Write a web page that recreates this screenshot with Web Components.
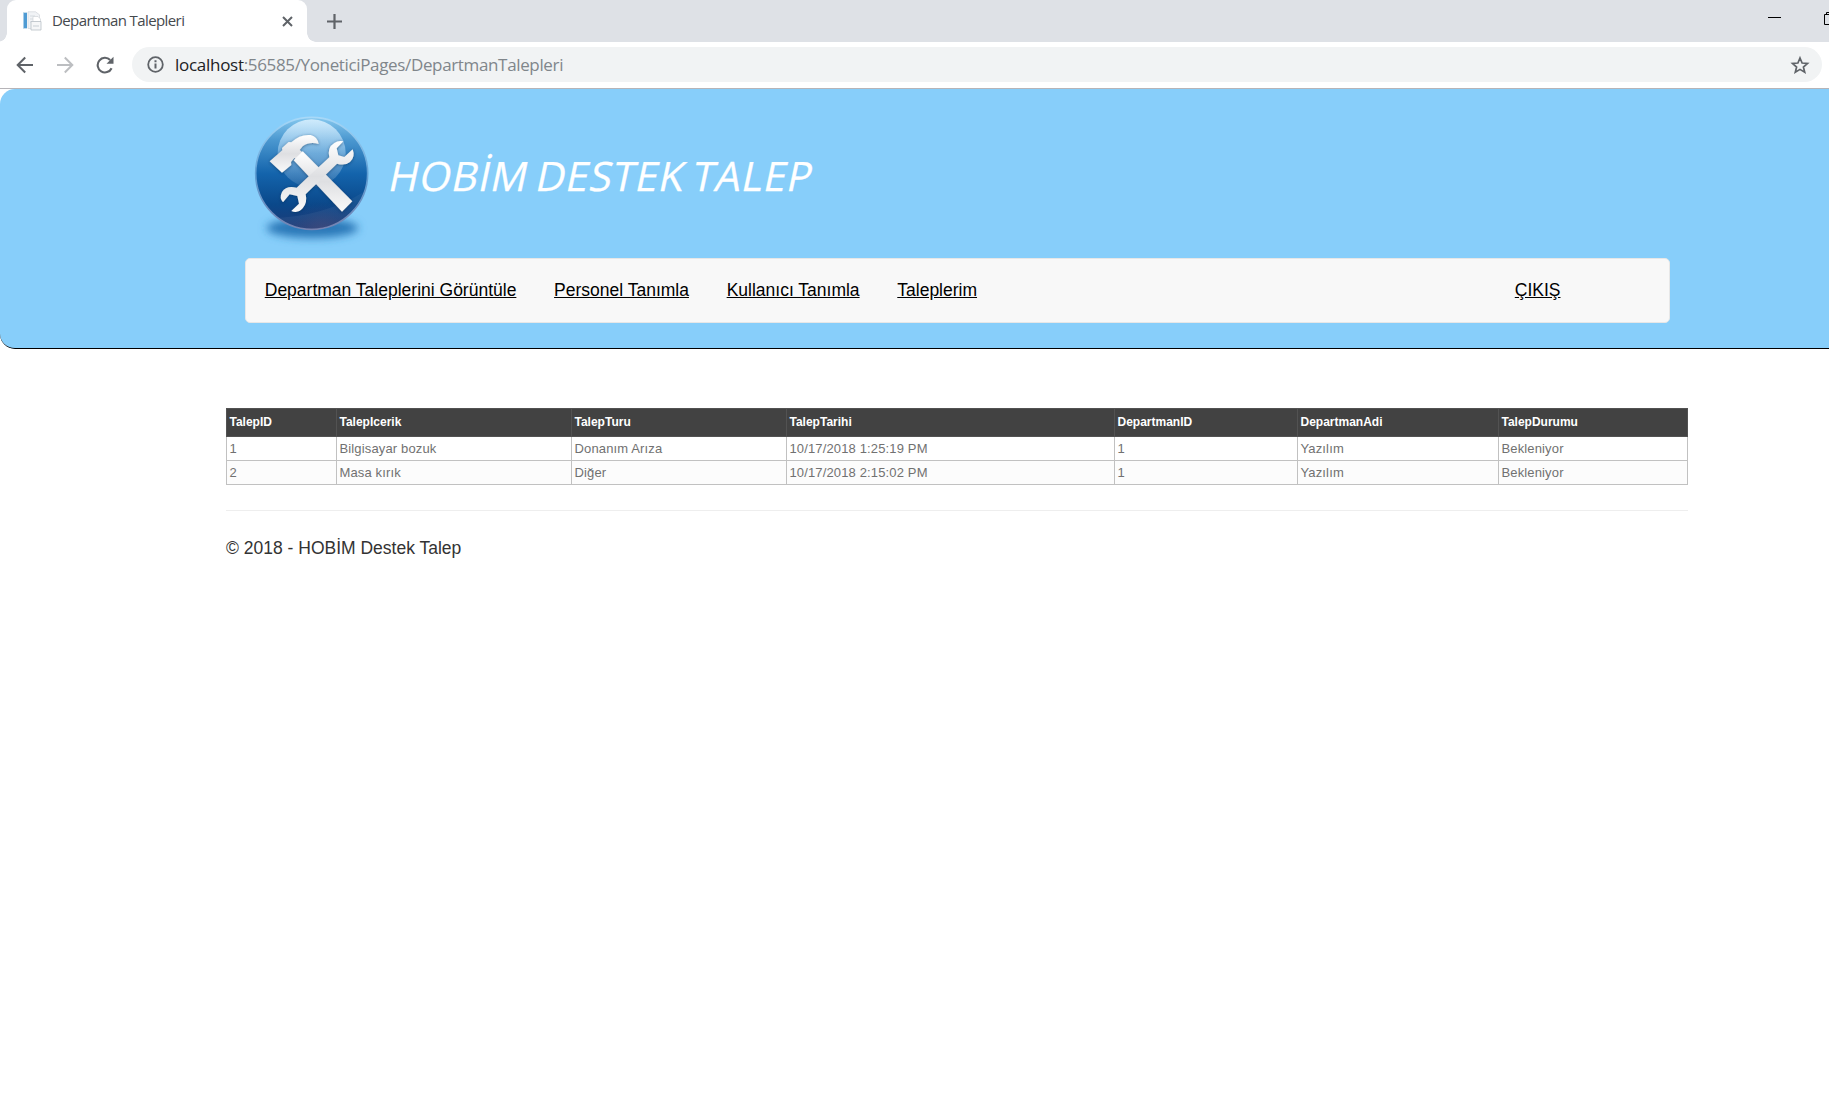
<!DOCTYPE html>
<html lang="tr">
<head>
<meta charset="utf-8">
<title>Departman Talepleri</title>
<style>
html,body{margin:0;padding:0;height:100%;overflow:hidden;background:#fff;font-family:"Liberation Sans",Arial,sans-serif}
</style>
</head>
<body>
<app-window></app-window>
<script>
const define = (name, html) => customElements.define(name, class extends HTMLElement {
  constructor() {
    super();
    const t = document.createElement('template');
    t.innerHTML = html;
    this.attachShadow({ mode: 'open' }).appendChild(t.content.cloneNode(true));
  }
});

define('tab-strip', `
<style>
:host{display:flex;height:42px;background:#dee1e6;position:relative;overflow:hidden}
.tab{box-sizing:border-box;margin-left:7px;width:300px;height:42px;background:#fff;border-radius:9px 9px 0 0;display:flex;align-items:center;padding-left:15px;position:relative}
.tab::before,.tab::after{content:"";position:absolute;bottom:0;width:9px;height:9px}
.tab::before{left:-9px;background:radial-gradient(circle at 0 0,transparent 8.5px,#fff 9px)}
.tab::after{right:-9px;background:radial-gradient(circle at 100% 0,transparent 8.5px,#fff 9px)}
.title{margin-left:10px;padding-bottom:2px;width:229.500px;font:15px/20px "Open Sans",sans-serif;letter-spacing:-.6px;color:#45494d;white-space:nowrap}
.plus{margin:12.500px 0 0 19px}
.win{margin:10px 0 0 auto}
svg{display:block;flex:none}
</style>
<div class="tab">
<svg width="20" height="20" viewBox="0 0 20 20"><rect x="1.500" y="2" width="3.500" height="15" fill="#4f9bd3"/><path d="M1 1.500h4M1 17.500h4" stroke="#c3dcec"/><path d="M6 .8h7.500l4 3v13.700H6z" fill="#f1f3f6" stroke="#d5d9de" stroke-width=".8"/><path d="M8 5h5M8 8h3M8 11h2" stroke="#d5dbe0"/><path d="M11 5.500h5l2.500 2.500v3h-7.500z" fill="#fff" stroke="#d0d4d9" stroke-width=".7"/><path d="M9 10.500h10v8.500H9z" fill="#f6f7f8" stroke="#b9c0c7" stroke-width=".8"/><path d="M11 15h6" stroke="#c8cfd5"/></svg>
<div class="title">Departman Talepleri</div>
<svg width="11" height="11" viewBox="0 0 11 11"><path d="M1 1l9 9M10 1l-9 9" stroke="#5f6368" stroke-width="2"/></svg>
</div>
<svg class="plus" width="17" height="17" viewBox="0 0 17 17"><path d="M8.5 1v15M1 8.5h15" stroke="#5f6368" stroke-width="2.2"/></svg>
<svg class="win" width="61" height="17" viewBox="0 0 61 17"><path d="M0 7.5h13M56.500 4.500v10h10v-10zM58.500 4v-1.500h4" fill="none" stroke="#000"/></svg>
`);

define('tool-bar', `
<style>
:host{box-sizing:border-box;height:47px;background:#fff;border-bottom:1px solid #b6b4b8;display:flex;align-items:flex-start;padding:5px 7px 0 16px}
svg{display:block;flex:none}
.b{margin-top:9px}
.fwd{margin-left:22px}
.rel{margin-left:22px}
.omni{box-sizing:border-box;margin-left:18px;flex:1;height:35px;border-radius:18px;background:#f1f3f4;display:flex;align-items:center;padding:0 12px 0 15px}
.url{margin-left:11px;flex:1;font:17px/24px "Open Sans",sans-serif;letter-spacing:-.35px;color:#80868b;white-space:nowrap}
.url b{font-weight:400;letter-spacing:-.28px;color:#202124}
</style>
<svg class="b" width="18" height="18" viewBox="0 0 18 18"><path d="M17 9H2M9.200 1.500L1.700 9l7.500 7.500" fill="none" stroke="#5f6368" stroke-width="2"/></svg>
<svg class="b fwd" width="18" height="18" viewBox="0 0 18 18"><path d="M1 9h15M8.800 1.500L16.300 9l-7.500 7.500" fill="none" stroke="#bcbec1" stroke-width="2"/></svg>
<svg class="b rel" width="18" height="18" viewBox="0 0 18 18"><path d="M15.600 12.200a7.300 7.300 0 1 1-1.400-8.200" fill="none" stroke="#5f6368" stroke-width="2.100"/><path d="M17.500 .8v7h-7z" fill="#5f6368"/></svg>
<div class="omni">
<svg width="17" height="17" viewBox="0 0 17 17"><circle cx="8.500" cy="8.500" r="7.300" fill="none" stroke="#5f6368" stroke-width="1.800"/><path d="M8.500 7.500v5M8.500 4.300v2" stroke="#5f6368" stroke-width="2"/></svg>
<div class="url"><b>localhost</b>:56585/YoneticiPages/DepartmanTalepleri</div>
<svg width="20" height="20" viewBox="0 0 20 20"><path d="M10 3l2.100 5 5.400.5-4.100 3.500 1.300 5.300-4.700-2.900-4.700 2.900 1.300-5.300-4.100-3.500 5.400-.5z" fill="none" stroke="#5f6368" stroke-width="1.700"/></svg>
</div>
`);

define('tools-logo', `
<style>:host{display:block;width:145px;height:158px}svg{display:block}</style>
<svg width="145" height="158" viewBox="15 0 435 474">
<defs>
<linearGradient id="g" x1="0" y1="0" x2="0" y2="1"><stop offset="0" stop-color="#86c8ee"/><stop offset=".2" stop-color="#4b98d0"/><stop offset=".5" stop-color="#1464ac"/><stop offset=".78" stop-color="#0a488a"/><stop offset="1" stop-color="#1f3a76"/></linearGradient>
<linearGradient id="h" x1="0" y1="0" x2="0" y2="1"><stop offset="0" stop-color="#d8effe" stop-opacity=".9"/><stop offset=".5" stop-color="#b4dcf8" stop-opacity=".45"/><stop offset="1" stop-color="#fff" stop-opacity=".08"/></linearGradient>
<linearGradient id="r" x1="0" y1="0" x2="0" y2="1"><stop offset="0" stop-color="#a8d9f8"/><stop offset=".5" stop-color="#5f9fd4"/><stop offset="1" stop-color="#7583b2"/></linearGradient>
<linearGradient id="m" x1="0" y1="0" x2="0" y2="1"><stop offset="0" stop-color="#fff"/><stop offset=".5" stop-color="#dedfe2"/><stop offset="1" stop-color="#fafafa"/></linearGradient>
<radialGradient id="p" cx=".6" cy="1.04" r=".3"><stop offset="0" stop-color="#564a74" stop-opacity=".45"/><stop offset="1" stop-color="#2a3d78" stop-opacity="0"/></radialGradient>
<filter id="s" x="-30%" y="-80%" width="160%" height="260%"><feGaussianBlur stdDeviation="13"/></filter>
<filter id="d" x="-20%" y="-20%" width="140%" height="140%"><feDropShadow dx="0" dy="2" stdDeviation="4" flood-color="#062c55" flood-opacity=".6"/></filter>
<clipPath id="c"><circle cx="215" cy="220" r="167"/></clipPath>
</defs>
<ellipse cx="217" cy="384" rx="138" ry="30" fill="#2c78b8" filter="url(#s)"/>
<circle cx="215" cy="220" r="168" fill="url(#g)" stroke="url(#r)" stroke-width="5"/>
<g clip-path="url(#c)"><circle cx="215" cy="220" r="167" fill="url(#p)"/>
<path d="M45 352q180 14 330-78v120H45z" fill="#fff" opacity=".05"/></g>
<circle cx="215" cy="160" r="102" fill="url(#h)"/>
<g fill="url(#m)" filter="url(#d)">
<path d="M89 184L127 151l-1-7 20-18 8 1q26-25 58-22 20 5 24 27-28-8-48 7l-9 11 20 17-19 18-17-11-10 12 1 9-28 23z"/>
<path d="M161 181l27-27 149 150-31 31z"/>
<path d="M203 232l65-60q-7-30 15-43 11-8 27-5l-20 21 5 21 18 5 25-23q9 23-8 38-15 12-39 5l-94 92q6 25-9 42-14 16-34 8l23-22-5-23-23-5-20 24q-12-13-3-31 13-21 44-13z"/>
</g>
</svg>
`);

define('site-nav', `
<style>
:host{box-sizing:border-box;height:65px;width:1425px;border:1px solid #e7e7e7;border-radius:5px;background:#f8f8f8;display:flex;align-items:center;padding:0 108.500px 0 18.750px;gap:37.700px}
::slotted(a){font-size:17.500px;line-height:25px;color:#000;text-decoration:underline}
::slotted(a:last-of-type){margin-left:auto}
</style><slot></slot>
`);

define('site-header', `
<style>
:host{box-sizing:border-box;display:block;height:260px;background:#87cefa;border-bottom:1px solid #000;border-radius:15px 0 0 15px;padding:11px 0 0 245px}
.brand{display:flex;align-items:flex-start;height:158px}
h1{margin:51px 0 0 -.5px;font:400 40.500px/50px "Open Sans",sans-serif;letter-spacing:.8px;word-spacing:-3.500px;color:#fff;-webkit-text-stroke:.3px #fff;transform:skewX(-12deg);white-space:nowrap}
</style>
<div class="brand"><tools-logo></tools-logo><h1>HOBİM DESTEK TALEP</h1></div>
<site-nav><a href="#">Departman Taleplerini Görüntüle</a><a href="#">Personel Tanımla</a><a href="#">Kullanıcı Tanımla</a><a href="#">Taleplerim</a><a href="#">ÇIKIŞ</a></site-nav>
`);

customElements.define('request-table', class extends HTMLElement {
  connectedCallback() {
    const widths = [110, 235, 215, 328, 183, 201, 189];
    const heads = ['TalepID', 'TalepIcerik', 'TalepTuru', 'TalepTarihi', 'DepartmanID', 'DepartmanAdi', 'TalepDurumu'];
    const rows = [
      ['1', 'Bilgisayar bozuk', 'Donanım Arıza', '10/17/2018 1:25:19 PM', '1', 'Yazılım', 'Bekleniyor'],
      ['2', 'Masa kırık', 'Diğer', '10/17/2018 2:15:02 PM', '1', 'Yazılım', 'Bekleniyor']
    ];
    const line = (cls, cells) => `<div class="row ${cls}">${cells.map(c => `<div class="cell">${c}</div>`).join('')}</div>`;
    this.attachShadow({ mode: 'open' }).innerHTML = `
<style>
:host{display:block;width:1462px;color:#717171;font-size:13px;letter-spacing:.14px}
.row{display:grid;grid-template-columns:${widths.map(w => w + 'px').join(' ')};width:1462px;height:24px;box-sizing:border-box;border-bottom:1px solid #c1c1c1;border-left:1px solid #c1c1c1}
.row.odd{background:#fcfcfc}
.cell{box-sizing:border-box;border-right:1px solid #c1c1c1;padding:0 0 0 2.500px;line-height:23px;white-space:nowrap}
.head{height:29px;background:#424242;color:#fff;font-weight:700;font-size:12px;letter-spacing:0;border:1px solid #525252}
.head .cell{border-right-color:#525252;line-height:26px}
.head .cell:last-child{border-right:0}
</style>` + line('head', heads) + line('', rows[0]) + line('odd', rows[1]);
  }
});

define('site-footer', `
<style>
:host{display:block;width:1462px;margin-top:25px;border-top:1px solid #eee;padding-top:25px}
p{margin:0;font-size:17.500px;line-height:25px;color:#333}
</style><p>© 2018 - HOBİM Destek Talep</p>
`);

define('app-window', `
<style>:host{display:flex;flex-direction:column}main{margin:59px 0 0 226px}</style>
<tab-strip></tab-strip><tool-bar></tool-bar><site-header></site-header>
<main><request-table></request-table><site-footer></site-footer></main>
`);
</script>
</body>
</html>
